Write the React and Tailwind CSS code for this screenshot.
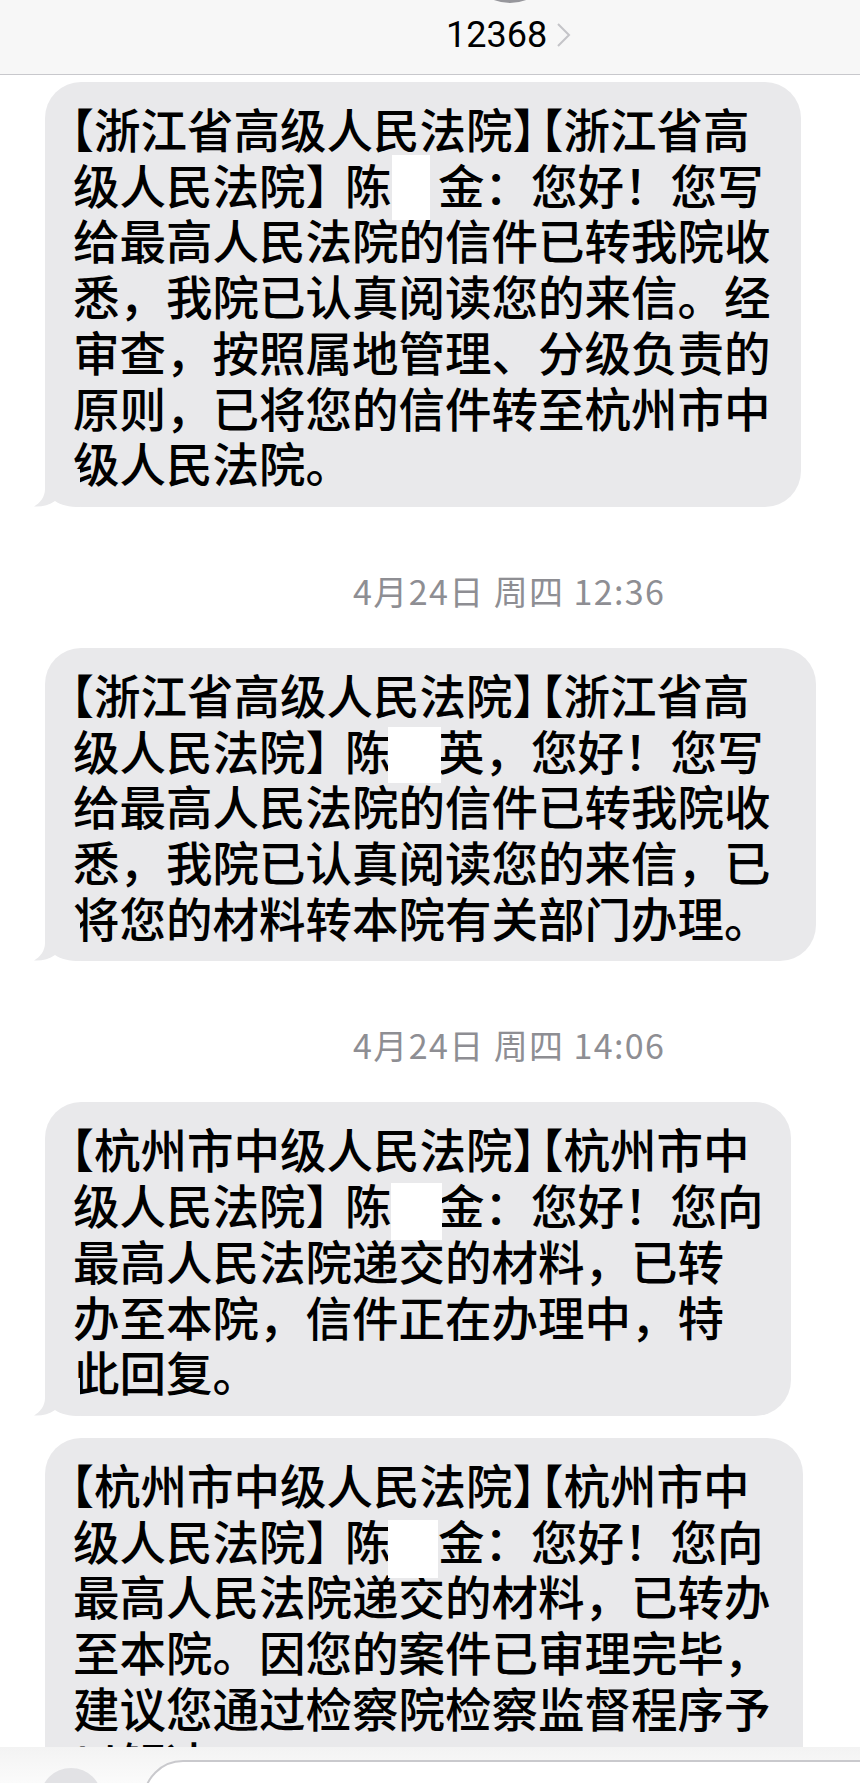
import React from "react"

const cjk = { fontFamily: '"Noto Sans CJK SC", "Noto Sans", sans-serif' }

// "#" marks the blanked-out character of the name
const messages = [
  {
    type: "bubble",
    width: "w-[756px]",
    tail: true,
    box: "top-[-1px] h-[65px] w-[38px] left-[0px]",
    lines: [
      "【浙江省高级人民法院】【浙江省高",
      "级人民法院】陈#金：您好！您写",
      "给最高人民法院的信件已转我院收",
      "悉，我院已认真阅读您的来信。经",
      "审查，按照属地管理、分级负责的",
      "原则，已将您的信件转至杭州市中",
      "级人民法院。",
    ],
  },
  { type: "time", text: "4月24日 周四 12:36" },
  {
    type: "bubble",
    width: "w-[771px]",
    tail: true,
    box: "top-[5px] h-[56px] w-[53px] left-[-4px]",
    lines: [
      "【浙江省高级人民法院】【浙江省高",
      "级人民法院】陈#英，您好！您写",
      "给最高人民法院的信件已转我院收",
      "悉，我院已认真阅读您的来信，已",
      "将您的材料转本院有关部门办理。",
    ],
  },
  { type: "time", text: "4月24日 周四 14:06" },
  {
    type: "bubble",
    width: "w-[746px]",
    tail: true,
    box: "top-[7px] h-[57px] w-[51px] left-[-1px]",
    lines: [
      "【杭州市中级人民法院】【杭州市中",
      "级人民法院】陈#金：您好！您向",
      "最高人民法院递交的材料，已转",
      "办至本院，信件正在办理中，特",
      "此回复。",
    ],
  },
  {
    type: "bubble",
    width: "w-[758px]",
    tail: false,
    close: true,
    box: "top-[8px] h-[58px] w-[50px] left-[-4px]",
    lines: [
      "【杭州市中级人民法院】【杭州市中",
      "级人民法院】陈#金：您好！您向",
      "最高人民法院递交的材料，已转办",
      "至本院。因您的案件已审理完毕，",
      "建议您通过检察院检察监督程序予",
      "以解决。",
    ],
  },
]

const Tail = () => (
  <svg
    className="absolute left-[-11px] bottom-0"
    width="46"
    height="38"
    viewBox="0 0 46 38"
  >
    <path
      d="M11 0 L11 20 C11 28 6 34 0 37.5 C8 38 15 36 21 32 C27 36 35 38 46 38 L46 0 Z"
      fill="#e9e9eb"
    />
  </svg>
)

// squeeze the lenticular brackets the way the phone does
const renderText = (text, start) =>
  Array.from(text).map((ch, i) => {
    if (ch === "【")
      return (
        <span key={i} className={start && i === 0 ? "ml-[-0.55em]" : "ml-[-0.25em]"}>
          {ch}
        </span>
      )
    if (ch === "】")
      return (
        <span key={i} className="mr-[-0.15em]">
          {ch}
        </span>
      )
    return ch
  })

const Line = ({ text, box }) => {
  const parts = text.split("#")
  if (parts.length === 1) return <div className="whitespace-nowrap">{renderText(text, true)}</div>
  return (
    <div className="whitespace-nowrap">
      {renderText(parts[0], true)}
      <span className="relative inline-block w-[1em] h-[55.7px] align-top">
        <span className={`absolute bg-white ${box}`} />
      </span>
      {renderText(parts[1], false)}
    </div>
  )
}

const Bubble = ({ msg }) => (
  <div
    className={`relative ml-[45px] ${msg.close ? "mt-[22px]" : ""} ${msg.width} rounded-[36px] bg-[#e9e9eb] pl-[28px] pt-[18px] pb-[17px] text-[46.5px] font-medium leading-[55.7px] text-black`}
    style={cjk}
  >
    {msg.tail && <Tail />}
    {msg.lines.map((l, i) => (
      <Line key={i} text={l} box={msg.box} />
    ))}
  </div>
)

const Stamp = ({ text }) => (
  <div
    className="mt-[66px] mb-[39px] pl-[353px] h-[36px] leading-[36px] text-[34px] text-[#8e8e93] whitespace-nowrap tracking-[1.4px]"
    style={cjk}
  >
    {text}
  </div>
)

export default function App() {
  return (
    <div className="relative h-[1783px] w-full overflow-hidden bg-white">
      {/* header */}
      <div className="relative h-[75px] border-b border-[#c8c8cc] bg-[#f7f7f7] flex items-center pl-[446px]">
        <div className="absolute left-[465px] top-[-87px] w-[90px] h-[90px] rounded-full bg-[#97979c]" />
        <span
          className="text-[36px] text-black leading-none mt-[-4px]"
          style={{ fontFamily: "Roboto, 'Liberation Sans', sans-serif" }}
        >
          12368
        </span>
        <svg className="ml-[9px] mt-[-4px]" width="15" height="24" viewBox="0 0 15 24">
          <polyline points="2,1 13,12 2,23" fill="none" stroke="#c4c4c8" strokeWidth="2" />
        </svg>
      </div>

      <div className="pt-[7px]">
        {messages.map((m, i) =>
          m.type === "time" ? <Stamp key={i} text={m.text} /> : <Bubble key={i} msg={m} />
        )}
      </div>

      {/* input bar */}
      <div className="absolute left-0 right-0 bottom-0 h-[36px] bg-gradient-to-b from-[#f3f3f3] to-[#fbfbfb]">
        <div className="absolute left-[40px] top-[21px] w-[62px] h-[62px] rounded-full bg-[#e2e2e5]" />
        <div className="absolute left-[143px] right-[-60px] top-[13px] h-[80px] rounded-[40px] border-2 border-[#c9c9cd] bg-white" />
      </div>
    </div>
  )
}
